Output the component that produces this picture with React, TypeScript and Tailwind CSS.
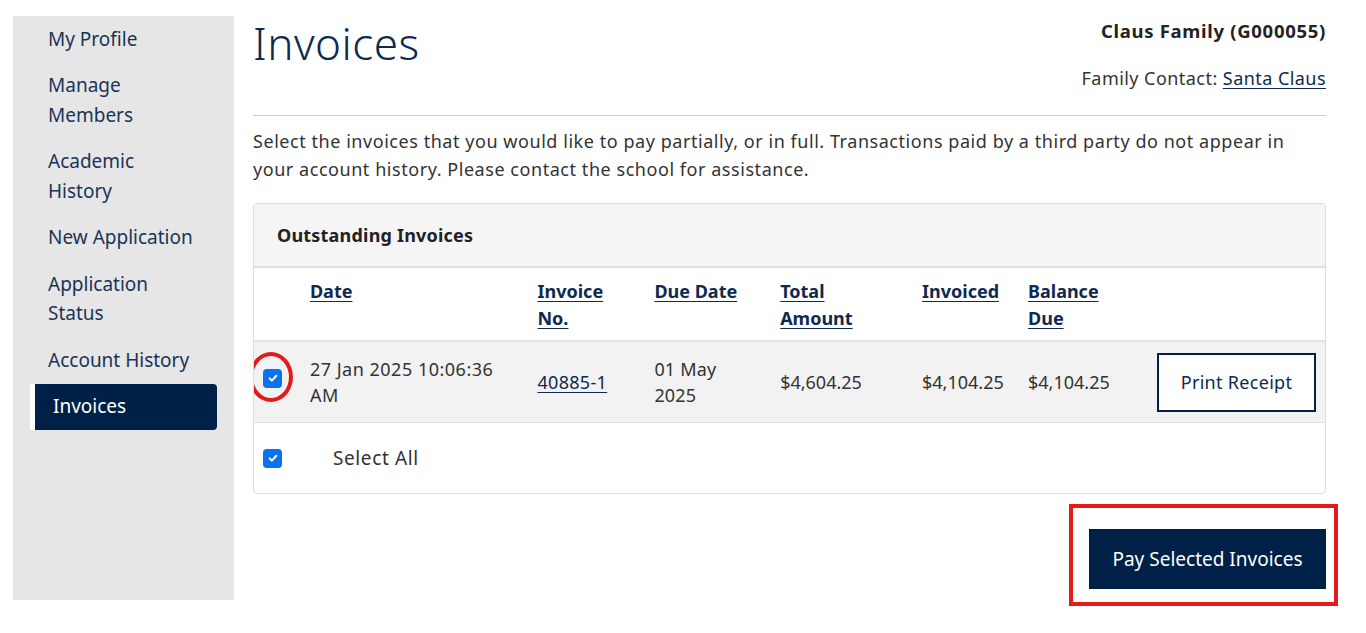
import React from 'react';

const navItems: { lines: string[]; active?: boolean }[] = [
  { lines: ['My Profile'] },
  { lines: ['Manage', 'Members'] },
  { lines: ['Academic', 'History'] },
  { lines: ['New Application'] },
  { lines: ['Application', 'Status'] },
  { lines: ['Account History'] },
  { lines: ['Invoices'], active: true },
];

const CheckBox: React.FC = () => (
  <span className="inline-flex h-[19px] w-[19px] items-center justify-center rounded-[4px] bg-[#0b72ee]">
    <svg viewBox="0 0 16 16" className="h-[12px] w-[12px]" fill="none" stroke="white" strokeWidth="2.6" strokeLinecap="round" strokeLinejoin="round">
      <path d="M3.5 8.5l3 3 6-6.5" />
    </svg>
  </span>
);

const headers = [
  { label: ['Date'], w: 'w-[228px]' },
  { label: ['Invoice', 'No.'], w: 'w-[117px]' },
  { label: ['Due Date'], w: 'w-[126px]' },
  { label: ['Total', 'Amount'], w: 'w-[142px]' },
  { label: ['Invoiced'], w: 'w-[106px]' },
  { label: ['Balance', 'Due'], w: 'w-[129px]' },
];

export default function App() {
  return (
    <div className="min-h-[633px] bg-white pt-4 pl-[13px] pr-[40px] font-['Noto_Sans','Open_Sans',sans-serif] text-[18px] text-[#333]">
      <div className="flex gap-[19px]">
        {/* sidebar */}
        <aside className="h-[584px] w-[221px] shrink-0 bg-[#e6e6e6]">
          <ul className="flex flex-col">
            {navItems.map((item) =>
              item.active ? (
                <li key={item.lines.join(' ')} className="mx-[17px] rounded-r-[4px] border-l-[5px] border-white bg-[#002147] py-[8.5px] pl-[18px] text-[19px] leading-[29px] text-white">
                  {item.lines[0]}
                </li>
              ) : (
                <li key={item.lines.join(' ')} className="whitespace-nowrap py-[8.5px] pl-[35px] text-[19px] leading-[29.5px] text-[#1b3457]">
                  {item.lines.map((l) => (
                    <div key={l}>{l}</div>
                  ))}
                </li>
              )
            )}
          </ul>
        </aside>

        {/* main */}
        <main className="flex-1">
          <div className="flex items-start justify-between border-b border-[#cfcfcf] pb-[24px]">
            <h1 className="mt-[-2px] text-[44px] font-light leading-[58px] tracking-[0.5px] text-[#0f2a4f]">Invoices</h1>
            <div className="flex flex-col items-end pt-[2px]">
              <div className="text-[18.5px] font-bold leading-[26px] tracking-[0.7px] text-[#222]">Claus Family (G000055)</div>
              <div className="mt-[21px] text-[18px] leading-[26px] tracking-[0.45px] text-[#333]">
                Family Contact: <a className="text-[#0f2a4f] underline underline-offset-[3px]">Santa Claus</a>
              </div>
            </div>
          </div>

          <p className="mt-[11px] leading-[28px] tracking-[0.55px] text-[#333]">
            Select the invoices that you would like to pay partially, or in full. Transactions paid by a third party do not appear in your account history. Please contact the school for assistance.
          </p>

          {/* panel */}
          <div className="mt-[20px] overflow-hidden rounded-[4px] border border-[#dcdcdc]">
            <div className="flex h-[64px] items-center border-b-2 border-[#e0e0e0] bg-[#f5f5f5] px-[23px] font-bold tracking-[0.2px] text-[#222]">
              Outstanding Invoices
            </div>
            <table className="w-full border-collapse">
              <thead>
                <tr className="border-b-2 border-[#e3e3e3]">
                  <th className="w-[44px]" />
                  {headers.map((h) => (
                    <th key={h.label.join(' ')} className={`${h.w} px-[12px] pt-[10px] pb-[8px] text-left align-top font-bold leading-[27px] text-[#0f2a4f]`}>
                      {h.label.map((l) => (
                        <div key={l}>
                          <span className="underline underline-offset-[3px]">{l}</span>
                        </div>
                      ))}
                    </th>
                  ))}
                  <th />
                </tr>
              </thead>
              <tbody>
                <tr className="border-b border-[#dedede] bg-[#f2f2f2]">
                  <td className="relative pl-[9px] align-middle">
                    <div className="mb-[8px] flex">
                      <CheckBox />
                    </div>
                    <span className="pointer-events-none absolute left-[-5px] top-[10px] h-[50px] w-[44px] rounded-[50%] border-[4px] border-[#e21b1b]" />
                  </td>
                  <td className="px-[12px] py-[14px] leading-[26px] tracking-[0.5px]">27 Jan 2025 10:06:36 AM</td>
                  <td className="px-[12px] leading-[26px]">
                    <a className="tracking-[0.3px] text-[#0f2a4f] underline underline-offset-[3px]">40885-1</a>
                  </td>
                  <td className="px-[12px] leading-[26px] tracking-[0.2px]">
                    01 May
                    <br />
                    2025
                  </td>
                  <td className="px-[12px]">$4,604.25</td>
                  <td className="px-[12px]">$4,104.25</td>
                  <td className="px-[12px]">$4,104.25</td>
                  <td className="pr-[9px] pl-[12px] text-right">
                    <button className="h-[59px] w-[159px] border-2 border-[#002147] bg-white text-[18px] tracking-[0.3px] text-[#0f2a4f]">Print Receipt</button>
                  </td>
                </tr>
              </tbody>
            </table>
            <div className="flex h-[70px] items-center pl-[9px]">
              <CheckBox />
              <span className="ml-[51px] text-[19px] tracking-[0.6px] text-[#333]">Select All</span>
            </div>
          </div>

          <div className="mt-[35px] flex justify-end">
            <div className="relative">
              <button className="h-[60px] w-[237px] bg-[#002147] text-[19px] text-white">Pay Selected Invoices</button>
              <span className="pointer-events-none absolute left-[-20px] top-[-25px] h-[102px] w-[269px] border-[4px] border-[#e21b1b]" />
            </div>
          </div>
        </main>
      </div>
    </div>
  );
}
